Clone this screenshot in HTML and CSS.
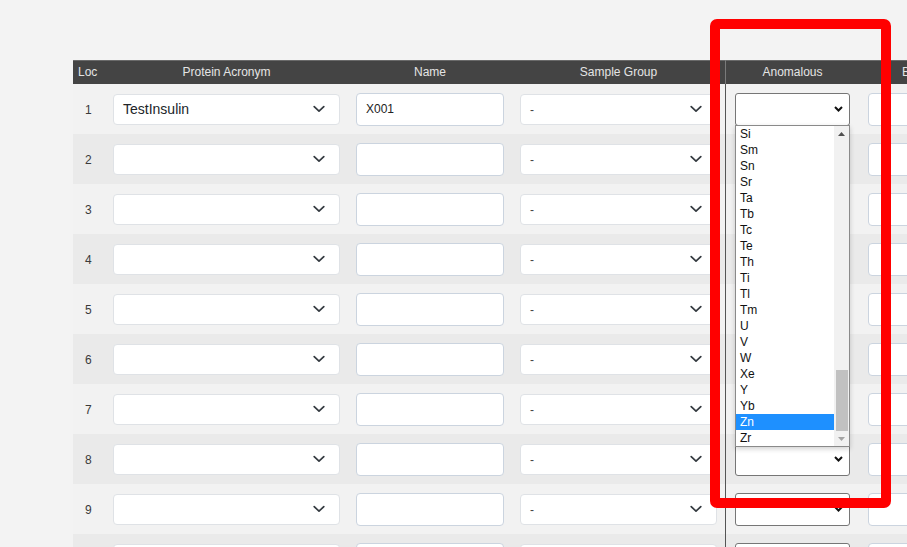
FILE: index.html
```html
<!DOCTYPE html>
<html>
<head>
<meta charset="utf-8">
<link rel="stylesheet" href="styles.css">
</head>
<body>
<div class="page">
  <div class="grid">
    <div class="row head">
      <div class="hc hc-loc">Loc</div>
      <div class="hc">Protein Acronym</div>
      <div class="hc">Name</div>
      <div class="hc">Sample Group</div>
      <div class="hc hc-anom">Anomalous</div>
      <div class="hc">B-factor</div>
    </div>
    <div class="row odd">
      <div class="cell loc">1</div>
      <div class="cell"><div class="fsel"><span class="val-lg">TestInsulin</span><svg class="chev" viewBox="0 0 12 8"><path d="M1.2 1.6 L6 6.2 L10.8 1.6"/></svg></div></div>
      <div class="cell"><input class="tin" value="X001"></div>
      <div class="cell"><div class="fsel"><span class="val-sm">-</span><svg class="chev" viewBox="0 0 12 8"><path d="M1.2 1.6 L6 6.2 L10.8 1.6"/></svg></div></div>
      <div class="cell anom"><div class="nsel"><svg class="nchev" viewBox="0 0 9 6"><path d="M1 1 L4.5 4.5 L8 1"/></svg></div></div>
      <div class="cell"><input class="tin"></div>
    </div>
    <div class="row even">
      <div class="cell loc">2</div>
      <div class="cell"><div class="fsel"><span class="val-lg"></span><svg class="chev" viewBox="0 0 12 8"><path d="M1.2 1.6 L6 6.2 L10.8 1.6"/></svg></div></div>
      <div class="cell"><input class="tin"></div>
      <div class="cell"><div class="fsel"><span class="val-sm">-</span><svg class="chev" viewBox="0 0 12 8"><path d="M1.2 1.6 L6 6.2 L10.8 1.6"/></svg></div></div>
      <div class="cell anom"><div class="nsel"><svg class="nchev" viewBox="0 0 9 6"><path d="M1 1 L4.5 4.5 L8 1"/></svg></div></div>
      <div class="cell"><input class="tin"></div>
    </div>
    <div class="row odd">
      <div class="cell loc">3</div>
      <div class="cell"><div class="fsel"><span class="val-lg"></span><svg class="chev" viewBox="0 0 12 8"><path d="M1.2 1.6 L6 6.2 L10.8 1.6"/></svg></div></div>
      <div class="cell"><input class="tin"></div>
      <div class="cell"><div class="fsel"><span class="val-sm">-</span><svg class="chev" viewBox="0 0 12 8"><path d="M1.2 1.6 L6 6.2 L10.8 1.6"/></svg></div></div>
      <div class="cell anom"><div class="nsel"><svg class="nchev" viewBox="0 0 9 6"><path d="M1 1 L4.5 4.5 L8 1"/></svg></div></div>
      <div class="cell"><input class="tin"></div>
    </div>
    <div class="row even">
      <div class="cell loc">4</div>
      <div class="cell"><div class="fsel"><span class="val-lg"></span><svg class="chev" viewBox="0 0 12 8"><path d="M1.2 1.6 L6 6.2 L10.8 1.6"/></svg></div></div>
      <div class="cell"><input class="tin"></div>
      <div class="cell"><div class="fsel"><span class="val-sm">-</span><svg class="chev" viewBox="0 0 12 8"><path d="M1.2 1.6 L6 6.2 L10.8 1.6"/></svg></div></div>
      <div class="cell anom"><div class="nsel"><svg class="nchev" viewBox="0 0 9 6"><path d="M1 1 L4.5 4.5 L8 1"/></svg></div></div>
      <div class="cell"><input class="tin"></div>
    </div>
    <div class="row odd">
      <div class="cell loc">5</div>
      <div class="cell"><div class="fsel"><span class="val-lg"></span><svg class="chev" viewBox="0 0 12 8"><path d="M1.2 1.6 L6 6.2 L10.8 1.6"/></svg></div></div>
      <div class="cell"><input class="tin"></div>
      <div class="cell"><div class="fsel"><span class="val-sm">-</span><svg class="chev" viewBox="0 0 12 8"><path d="M1.2 1.6 L6 6.2 L10.8 1.6"/></svg></div></div>
      <div class="cell anom"><div class="nsel"><svg class="nchev" viewBox="0 0 9 6"><path d="M1 1 L4.5 4.5 L8 1"/></svg></div></div>
      <div class="cell"><input class="tin"></div>
    </div>
    <div class="row even">
      <div class="cell loc">6</div>
      <div class="cell"><div class="fsel"><span class="val-lg"></span><svg class="chev" viewBox="0 0 12 8"><path d="M1.2 1.6 L6 6.2 L10.8 1.6"/></svg></div></div>
      <div class="cell"><input class="tin"></div>
      <div class="cell"><div class="fsel"><span class="val-sm">-</span><svg class="chev" viewBox="0 0 12 8"><path d="M1.2 1.6 L6 6.2 L10.8 1.6"/></svg></div></div>
      <div class="cell anom"><div class="nsel"><svg class="nchev" viewBox="0 0 9 6"><path d="M1 1 L4.5 4.5 L8 1"/></svg></div></div>
      <div class="cell"><input class="tin"></div>
    </div>
    <div class="row odd">
      <div class="cell loc">7</div>
      <div class="cell"><div class="fsel"><span class="val-lg"></span><svg class="chev" viewBox="0 0 12 8"><path d="M1.2 1.6 L6 6.2 L10.8 1.6"/></svg></div></div>
      <div class="cell"><input class="tin"></div>
      <div class="cell"><div class="fsel"><span class="val-sm">-</span><svg class="chev" viewBox="0 0 12 8"><path d="M1.2 1.6 L6 6.2 L10.8 1.6"/></svg></div></div>
      <div class="cell anom"><div class="nsel"><svg class="nchev" viewBox="0 0 9 6"><path d="M1 1 L4.5 4.5 L8 1"/></svg></div></div>
      <div class="cell"><input class="tin"></div>
    </div>
    <div class="row even">
      <div class="cell loc">8</div>
      <div class="cell"><div class="fsel"><span class="val-lg"></span><svg class="chev" viewBox="0 0 12 8"><path d="M1.2 1.6 L6 6.2 L10.8 1.6"/></svg></div></div>
      <div class="cell"><input class="tin"></div>
      <div class="cell"><div class="fsel"><span class="val-sm">-</span><svg class="chev" viewBox="0 0 12 8"><path d="M1.2 1.6 L6 6.2 L10.8 1.6"/></svg></div></div>
      <div class="cell anom"><div class="nsel"><svg class="nchev" viewBox="0 0 9 6"><path d="M1 1 L4.5 4.5 L8 1"/></svg></div></div>
      <div class="cell"><input class="tin"></div>
    </div>
    <div class="row odd">
      <div class="cell loc">9</div>
      <div class="cell"><div class="fsel"><span class="val-lg"></span><svg class="chev" viewBox="0 0 12 8"><path d="M1.2 1.6 L6 6.2 L10.8 1.6"/></svg></div></div>
      <div class="cell"><input class="tin"></div>
      <div class="cell"><div class="fsel"><span class="val-sm">-</span><svg class="chev" viewBox="0 0 12 8"><path d="M1.2 1.6 L6 6.2 L10.8 1.6"/></svg></div></div>
      <div class="cell anom"><div class="nsel"><svg class="nchev" viewBox="0 0 9 6"><path d="M1 1 L4.5 4.5 L8 1"/></svg></div></div>
      <div class="cell"><input class="tin"></div>
    </div>
    <div class="row even">
      <div class="cell loc">10</div>
      <div class="cell"><div class="fsel"><span class="val-lg"></span><svg class="chev" viewBox="0 0 12 8"><path d="M1.2 1.6 L6 6.2 L10.8 1.6"/></svg></div></div>
      <div class="cell"><input class="tin"></div>
      <div class="cell"><div class="fsel"><span class="val-sm">-</span><svg class="chev" viewBox="0 0 12 8"><path d="M1.2 1.6 L6 6.2 L10.8 1.6"/></svg></div></div>
      <div class="cell anom"><div class="nsel"><svg class="nchev" viewBox="0 0 9 6"><path d="M1 1 L4.5 4.5 L8 1"/></svg></div></div>
      <div class="cell"><input class="tin"></div>
    </div>
  </div>

  <div class="listbox">
    <div class="opts">
      <div class="opt">Si</div>
      <div class="opt">Sm</div>
      <div class="opt">Sn</div>
      <div class="opt">Sr</div>
      <div class="opt">Ta</div>
      <div class="opt">Tb</div>
      <div class="opt">Tc</div>
      <div class="opt">Te</div>
      <div class="opt">Th</div>
      <div class="opt">Ti</div>
      <div class="opt">Tl</div>
      <div class="opt">Tm</div>
      <div class="opt">U</div>
      <div class="opt">V</div>
      <div class="opt">W</div>
      <div class="opt">Xe</div>
      <div class="opt">Y</div>
      <div class="opt">Yb</div>
      <div class="opt sel">Zn</div>
      <div class="opt">Zr</div>
    </div>
    <div class="sbar">
      <div class="sbtn"><svg class="tri up" viewBox="0 0 7 4"><polygon points="0,4 3.5,0 7,4"/></svg></div>
      <div class="strack"><div class="sthumb"></div></div>
      <div class="sbtn"><svg class="tri down" viewBox="0 0 7 4"><polygon points="0,0 7,0 3.5,4"/></svg></div>
    </div>
  </div>

  <div class="highlight"></div>
</div>
</body>
</html>
```

FILE: styles.css
```css
html, body {
  margin: 0;
  padding: 0;
  overflow: hidden;
  background: #f3f3f3;
}

body {
  font-family: "Liberation Sans", Arial, sans-serif;
  color: #222;
  width: 907px;
  height: 547px;
}

.page {
  position: relative;
  width: 907px;
  height: 547px;
  padding: 60px 0 0 73px;
  box-sizing: border-box;
  overflow: hidden;
}

.grid {
  width: 913px;
}

.row {
  display: grid;
  grid-template-columns: 32px 243px 164px 213px 135px 126px;
}

.head {
  height: 24px;
  background: #444444;
  box-shadow: inset 0 1px 0 #6a6a6a;
}

.hc {
  display: flex;
  align-items: center;
  justify-content: center;
  color: #e4e4e4;
  font-size: 12px;
  white-space: nowrap;
}

.hc-loc {
  justify-content: flex-start;
  padding-left: 5px;
}

.hc-anom {
  box-shadow: inset 1px 0 0 #7a7a7a;
}

.row.odd, .row.even {
  height: 50px;
}

.odd {
  background: #f2f2f2;
}

.even {
  background: #eaeaea;
}

.cell {
  display: flex;
  align-items: center;
  padding: 0 8px;
  min-width: 0;
}

.loc {
  padding-left: 12px;
  padding-top: 2px;
  font-size: 12px;
  color: #3a3a3a;
}

.anom {
  padding: 0 10px 0 10px;
  box-shadow: inset 1px 0 0 #555555;
}

.fsel {
  flex: 1;
  height: 31px;
  box-sizing: border-box;
  background: #ffffff;
  border: 1px solid #dfe2e6;
  border-radius: 4px;
  display: flex;
  align-items: center;
  justify-content: space-between;
  padding: 0 14px 0 9px;
}

.val-lg {
  font-size: 14px;
  color: #212529;
}

.val-sm {
  font-size: 12px;
  color: #444;
  padding-top: 2px;
}

.chev {
  width: 12px;
  height: 8px;
  fill: none;
  stroke: #343a40;
  stroke-width: 1.7;
  stroke-linecap: round;
  stroke-linejoin: round;
}

.tin {
  flex: 1;
  min-width: 0;
  height: 33px;
  box-sizing: border-box;
  background: #ffffff;
  border: 1px solid #cbd4df;
  border-radius: 4px;
  padding: 0 9px;
  font-family: "Liberation Sans", Arial, sans-serif;
  font-size: 12px;
  color: #222;
  outline: none;
}

.nsel {
  flex: 1;
  height: 33px;
  box-sizing: border-box;
  background: #ffffff;
  border: 1px solid #767676;
  border-radius: 3px;
  display: flex;
  align-items: center;
  justify-content: flex-end;
  padding-right: 6px;
}

.nchev {
  width: 9px;
  height: 6px;
  fill: none;
  stroke: #111;
  stroke-width: 2;
}

.listbox {
  position: absolute;
  left: 735px;
  top: 125px;
  width: 115px;
  height: 322px;
  box-sizing: border-box;
  background: #ffffff;
  border: 1px solid #8a8a8a;
  display: flex;
  box-shadow: 0 2px 5px rgba(0, 0, 0, 0.18);
}

.opts {
  flex: 1;
  display: flex;
  flex-direction: column;
}

.opt {
  height: 16px;
  line-height: 16px;
  font-size: 12px;
  color: #111;
  padding-left: 4px;
  white-space: nowrap;
}

.opt.sel {
  background: #1e90ff;
  color: #ffffff;
}

.sbar {
  width: 15px;
  background: #f1f1f1;
  display: flex;
  flex-direction: column;
}

.sbtn {
  height: 15px;
  display: flex;
  align-items: center;
  justify-content: center;
}

.tri {
  width: 7px;
  height: 4px;
}

.tri.up {
  fill: #505050;
}

.tri.down {
  fill: #a3a3a3;
}

.strack {
  flex: 1;
  display: flex;
  flex-direction: column;
  justify-content: flex-end;
  padding: 0 1px 0 2px;
}

.sthumb {
  height: 61px;
  background: #c1c1c1;
}

.highlight {
  position: absolute;
  left: 710px;
  top: 19px;
  width: 181px;
  height: 489px;
  box-sizing: border-box;
  border: 10px solid #ff0000;
  border-radius: 7px;
}
```
